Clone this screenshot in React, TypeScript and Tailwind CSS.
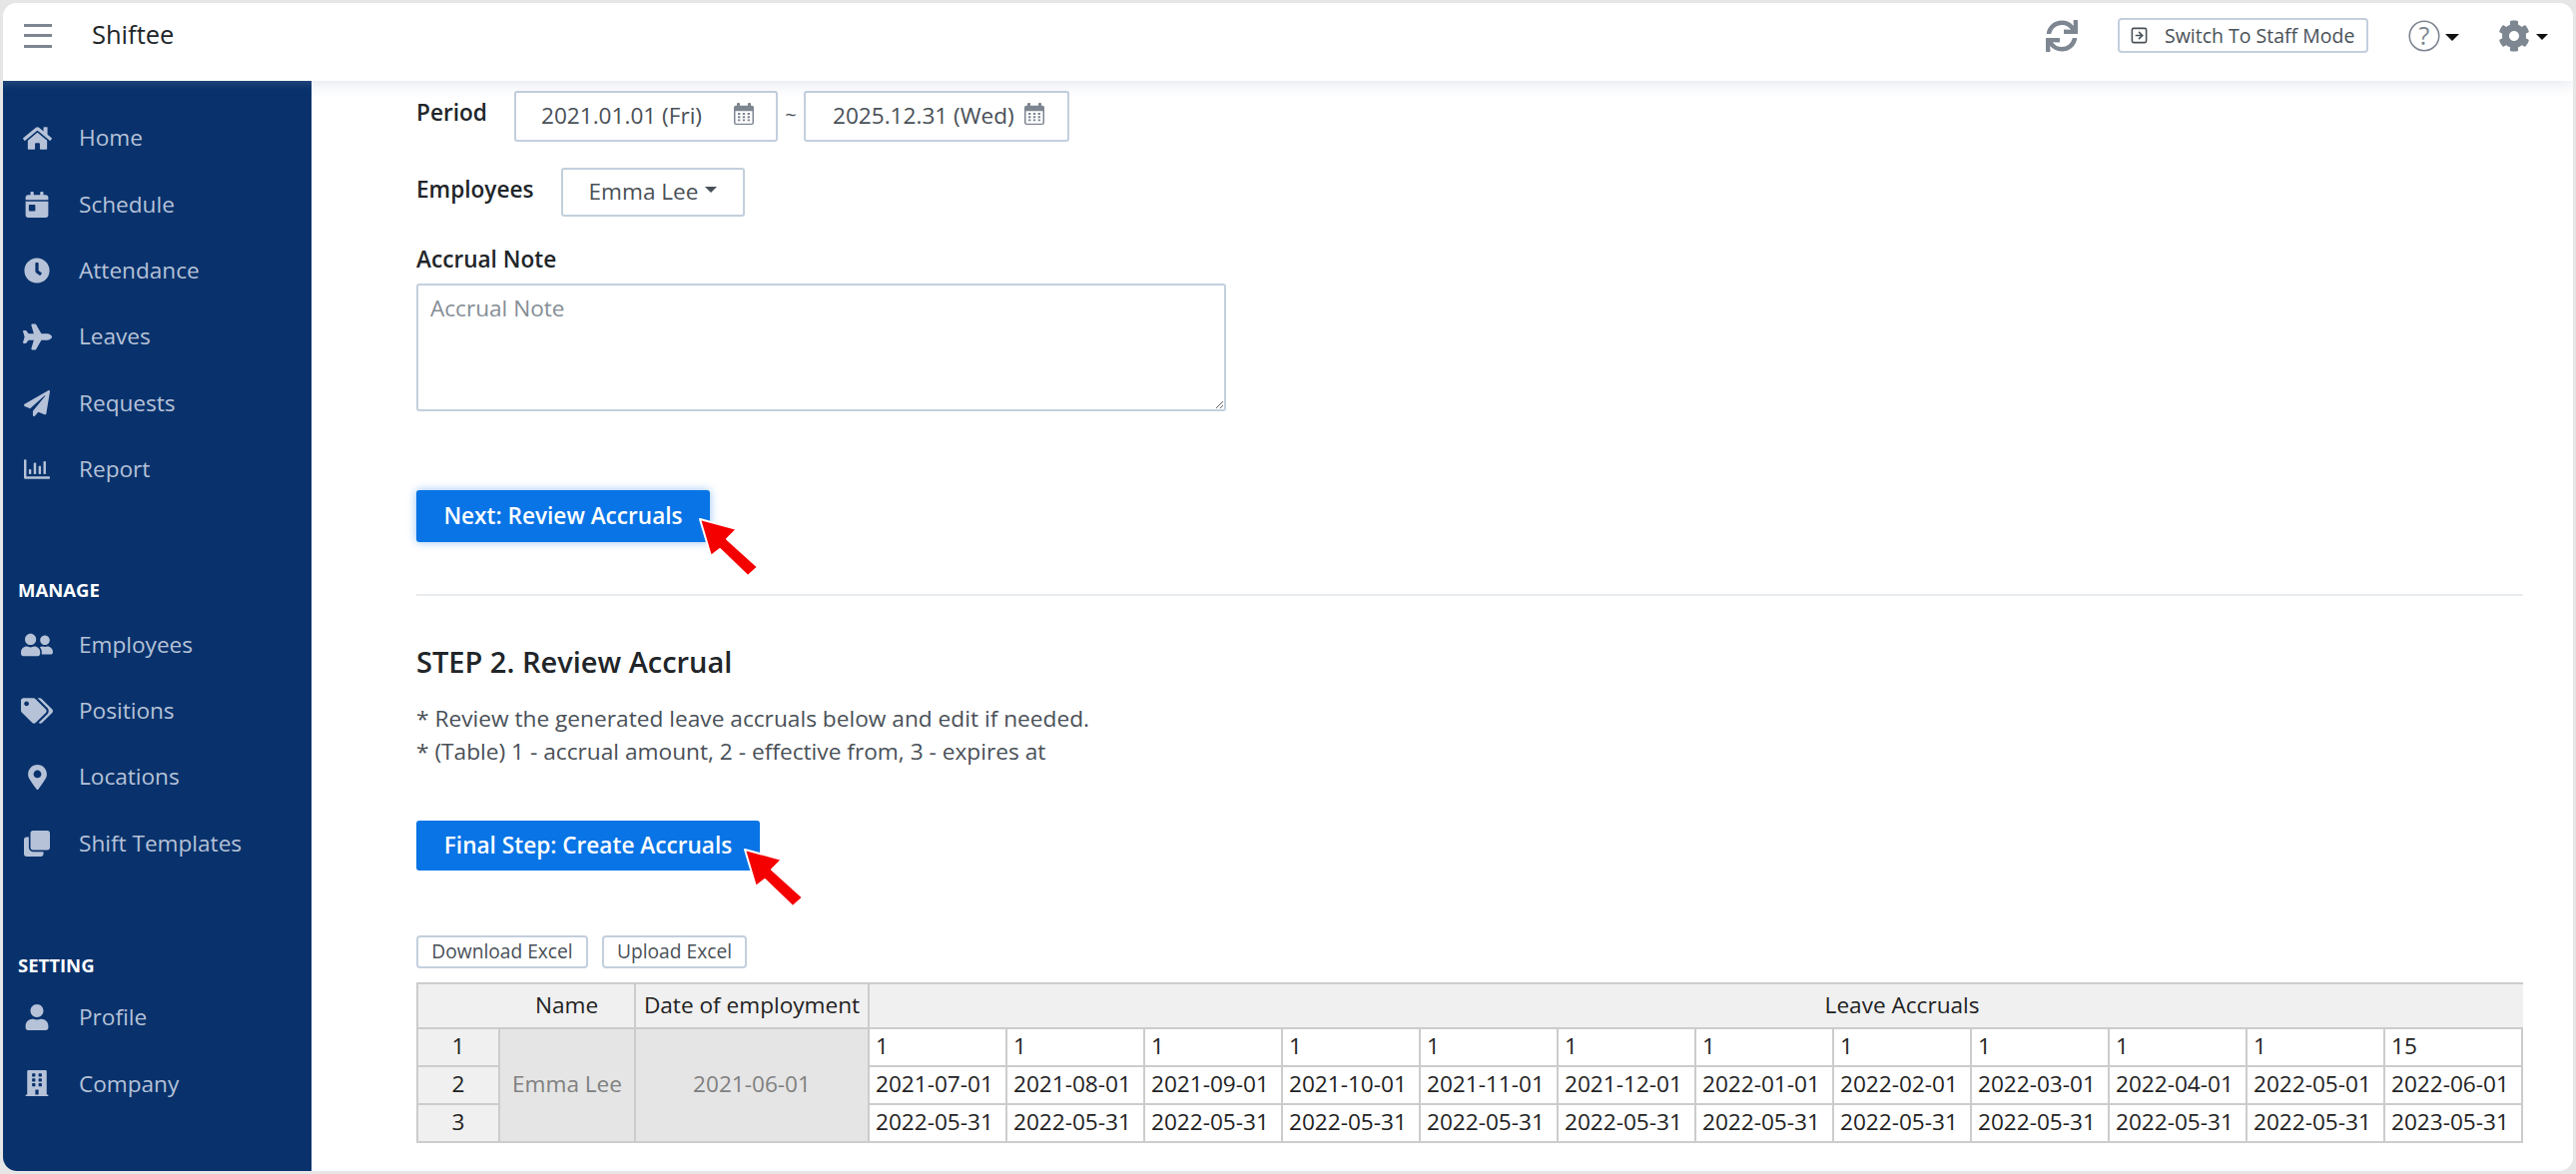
import { SquareArrowRight } from 'lucide-react'
import type { IconType } from 'react-icons'
import {
  FaBuilding,
  FaCalendarDay,
  FaClock,
  FaClone,
  FaCog,
  FaHome,
  FaMapMarkerAlt,
  FaPaperPlane,
  FaPlane,
  FaRegChartBar,
  FaSync,
  FaTags,
  FaUser,
  FaUserFriends,
} from 'react-icons/fa'

const mainLinks: Array<[string, IconType, number]> = [
  ['Home', FaHome, 29],
  ['Schedule', FaCalendarDay, 26],
  ['Attendance', FaClock, 26],
  ['Leaves', FaPlane, 29],
  ['Requests', FaPaperPlane, 26],
  ['Report', FaRegChartBar, 26],
]
const manageLinks: Array<[string, IconType, number]> = [
  ['Employees', FaUserFriends, 32],
  ['Positions', FaTags, 32],
  ['Locations', FaMapMarkerAlt, 25],
  ['Shift Templates', FaClone, 26],
]
const settingLinks: Array<[string, IconType, number]> = [
  ['Profile', FaUser, 26],
  ['Company', FaBuilding, 26],
]

const amounts = ['1', '1', '1', '1', '1', '1', '1', '1', '1', '1', '1', '15', '', '', '']
const effective = [
  '2021-07-01', '2021-08-01', '2021-09-01', '2021-10-01', '2021-11-01', '2021-12-01',
  '2022-01-01', '2022-02-01', '2022-03-01', '2022-04-01', '2022-05-01', '2022-06-01', '', '', '',
]
const expires = [
  '2022-05-31', '2022-05-31', '2022-05-31', '2022-05-31', '2022-05-31', '2022-05-31',
  '2022-05-31', '2022-05-31', '2022-05-31', '2022-05-31', '2022-05-31', '2023-05-31', '', '', '',
]

function NavLinks({ links }: { links: Array<[string, IconType, number]> }) {
  return (
    <>
      {links.map(([label, Icon, size]) => (
        <div key={label} className="flex h-[66.4px] items-center gap-[24px] pl-[16px] text-[22.6px] text-[#b6c2d8]">
          <span className="flex w-[36px] justify-center">
            <Icon size={size} />
          </span>
          {label}
        </div>
      ))}
    </>
  )
}

function CalendarIcon() {
  return (
    <svg width="20" height="22" viewBox="0 0 20 24" preserveAspectRatio="none" className="-mt-[4px] shrink-0 text-[#7d8691]">
      <rect x="3" y="0" width="3" height="5" rx="1" fill="currentColor" />
      <rect x="14" y="0" width="3" height="5" rx="1" fill="currentColor" />
      <path d="M2 3h16a2 2 0 0 1 2 2v4H0V5a2 2 0 0 1 2-2z" fill="currentColor" />
      <rect x="0.75" y="6" width="18.5" height="17.25" rx="1.5" fill="none" stroke="currentColor" strokeWidth="1.5" />
      <path d="M4 12h2.4M8.8 12h2.4M13.6 12h2.4M4 15.5h2.4M8.8 15.5h2.4M13.6 15.5h2.4M4 19h2.4M8.8 19h2.4M13.6 19h2.4" stroke="currentColor" strokeWidth="2" />
    </svg>
  )
}

function RedArrow({ className }: { className: string }) {
  return (
    <svg width="66" height="66" viewBox="-3 -3 66 66" className={className}>
      <polygon
        points="0,0 37,10 27,20 58,48 48,57 20,30 11,37"
        fill="#f50000"
        stroke="#ffffff"
        strokeWidth="2"
        strokeLinejoin="round"
      />
    </svg>
  )
}

const cellClass = 'border-2 border-[#cccccc] px-[6px] pb-[2px] text-left text-[22.6px] font-normal text-[#222222] whitespace-nowrap'
const rowHeadClass = 'border-2 border-[#cccccc] bg-[#f0f0f0] pb-[2px] text-center text-[22.6px] font-normal text-[#222222]'
const mergedClass = 'border-2 border-[#cccccc] bg-[#e5e5e5] pb-[2px] text-center text-[22.6px] font-normal text-[#808080]'

export default function App() {
  return (
    <div className="h-[1176px] w-[2580px] overflow-hidden bg-[#e6e6e6] p-[3px] font-['Open_Sans',sans-serif]">
      <div className="flex h-full flex-col overflow-hidden rounded-[14px] bg-white">
        <header className="relative z-10 flex h-[78px] shrink-0 items-center bg-white pb-[13px] pr-[25px] shadow-[0_3px_14px_rgba(40,70,120,0.13)]">
          <div className="ml-[21px] flex h-[24px] w-[28px] flex-col justify-between">
            <span className="h-[3px] bg-[#7d8691]" />
            <span className="h-[3px] bg-[#7d8691]" />
            <span className="h-[3px] bg-[#7d8691]" />
          </div>
          <span className="ml-[40px] -mt-[3px] text-[25.5px] text-[#212529]">Shiftee</span>

          <FaSync size={32} className="ml-auto text-[#7d8691]" />
          <button className="ml-[40px] flex h-[35px] w-[251px] items-center rounded-[4px] border-2 border-[#c3cfdd] pl-[10px] text-[19.5px] text-[#495057]">
            <SquareArrowRight size={19} className="mr-[16px] text-[#495057]" strokeWidth={2} />
            Switch To Staff Mode
          </button>
          <svg width="32" height="34" viewBox="0 0 32 34" className="ml-[40px] text-[#7d8691]">
            <circle cx="16" cy="17" r="14.75" fill="none" stroke="currentColor" strokeWidth="1.6" />
            <text x="16" y="26" textAnchor="middle" fontSize="25" fill="currentColor" fontFamily="Open Sans">?</text>
          </svg>
          <span className="ml-[5px] mt-[3px] h-0 w-0 border-x-[7px] border-t-[7px] border-x-transparent border-t-[#111111]" />
          <FaCog size={32} className="ml-[39px] text-[#7d8691]" />
          <span className="ml-[6px] mt-[3px] h-0 w-0 border-x-[6px] border-t-[6px] border-x-transparent border-t-[#111111]" />
        </header>

        <div className="flex min-h-0 flex-1">
          <aside className="w-[309px] shrink-0 bg-[#09326c] pt-[24px] shadow-[inset_0_8px_8px_-6px_rgba(255,255,255,0.15)]">
            <NavLinks links={mainLinks} />
            <div className="mt-[73px] flex h-[30px] items-center pl-[15px] text-[18.5px] font-bold text-white">MANAGE</div>
            <div className="mt-[6px]">
              <NavLinks links={manageLinks} />
            </div>
            <div className="mt-[74px] flex h-[30px] items-center pl-[15px] text-[18.5px] font-bold text-white">SETTING</div>
            <div className="mt-[4px]">
              <NavLinks links={settingLinks} />
            </div>
          </aside>

          <main className="min-w-0 flex-1 overflow-hidden pl-[105px] pr-[50px] pt-[10px]">
            <div className="flex h-[51px] items-center">
              <span className="mr-[26px] -mt-[7px] w-[72px] text-[22.6px] font-semibold text-[#212529]">Period</span>
              <div className="flex h-[51px] w-[264px] items-center justify-between rounded-[3px] border-2 border-[#c3cfdd] pb-[2px] pl-[25px] pr-[22px] text-[22.6px] text-[#495057]">
                2021.01.01 (Fri)
                <CalendarIcon />
              </div>
              <span className="w-[26px] -mt-[3px] text-center text-[20px] text-[#495057]">~</span>
              <div className="flex h-[51px] w-[266px] items-center justify-between rounded-[3px] border-2 border-[#c3cfdd] pb-[2px] pl-[27px] pr-[23px] text-[22.6px] text-[#495057]">
                2025.12.31 (Wed)
                <CalendarIcon />
              </div>
            </div>

            <div className="mt-[26px] flex h-[49px] items-center">
              <span className="mr-[27px] -mt-[5px] w-[118px] text-[22.6px] font-semibold text-[#212529]">Employees</span>
              <button className="flex h-[49px] w-[184px] items-center justify-center rounded-[3px] border-2 border-[#c3cfdd] pb-[2px] text-[22.6px] text-[#495057]">
                Emma Lee
                <span className="ml-[7px] h-0 w-0 -translate-y-[2px] border-x-[6px] border-t-[6px] border-x-transparent border-t-[#495057]" />
              </button>
            </div>

            <div className="mt-[28px] h-[30px] text-[22.6px] leading-[30px] font-semibold text-[#212529]">Accrual Note</div>
            <textarea
              readOnly
              placeholder="Accrual Note"
              className="mt-[9px] block h-[128px] w-[811px] rounded-[3px] border-2 border-[#c3cfdd] px-[12px] py-[6px] text-[22.6px] placeholder:text-[#868e96] outline-none"
            />

            <button className="relative mt-[79px] block h-[52px] w-[294px] rounded-[3px] bg-[#0874e6] text-[22.6px] font-semibold text-white shadow-[0_0_8px_rgba(8,116,230,0.45)]">
              Next: Review Accruals
              <RedArrow className="absolute left-[281px] top-[26px]" />
            </button>

            <hr className="mt-[52px] border-t-2 border-[#e9ecef]" />

            <h2 className="mt-[46px] h-[40px] text-[29px] leading-[40px] font-semibold text-[#212529]">STEP 2. Review Accrual</h2>
            <p className="mt-[20px] text-[22.7px] leading-[33px] text-[#495057]">* Review the generated leave accruals below and edit if needed.</p>
            <p className="text-[22.7px] leading-[33px] text-[#495057]">* (Table) 1 - accrual amount, 2 - effective from, 3 - expires at</p>

            <button className="relative mt-[53px] block h-[50px] w-[344px] rounded-[3px] bg-[#0874e6] text-[22.6px] font-semibold text-white">
              Final Step: Create Accruals
              <RedArrow className="absolute left-[326px] top-[26px]" />
            </button>

            <div className="mt-[65px] flex gap-[14px]">
              <button className="h-[33px] w-[172px] rounded-[4px] border-2 border-[#c3cfdd] text-[19.2px] text-[#495057]">Download Excel</button>
              <button className="h-[33px] w-[145px] rounded-[4px] border-2 border-[#c3cfdd] text-[19.2px] text-[#495057]">Upload Excel</button>
            </div>

            <div className="mt-[14px] overflow-hidden">
              <table className="w-[2522px] table-fixed border-collapse">
                <colgroup>
                  <col className="w-[82px]" />
                  <col className="w-[136px]" />
                  <col className="w-[234px]" />
                  {amounts.map((_, index) => (
                    <col key={index} className="w-[138px]" />
                  ))}
                </colgroup>
                <thead>
                  <tr className="h-[45px]">
                    <th className="border-y-2 border-l-2 border-[#cccccc] bg-[#f0f0f0]" />
                    <th className={`${rowHeadClass} border-l-0`}>Name</th>
                    <th className={`${rowHeadClass} whitespace-nowrap`}>Date of employment</th>
                    <th colSpan={15} className={rowHeadClass}>Leave Accruals</th>
                  </tr>
                </thead>
                <tbody>
                  <tr className="h-[38px]">
                    <th className={rowHeadClass}>1</th>
                    <td rowSpan={3} className={mergedClass}>Emma Lee</td>
                    <td rowSpan={3} className={mergedClass}>2021-06-01</td>
                    {amounts.map((value, index) => (
                      <td key={index} className={cellClass}>{value}</td>
                    ))}
                  </tr>
                  <tr className="h-[36px]">
                    <th className={rowHeadClass}>2</th>
                    {effective.map((value, index) => (
                      <td key={index} className={cellClass}>{value}</td>
                    ))}
                  </tr>
                  <tr className="h-[38px]">
                    <th className={rowHeadClass}>3</th>
                    {expires.map((value, index) => (
                      <td key={index} className={cellClass}>{value}</td>
                    ))}
                  </tr>
                </tbody>
              </table>
            </div>
          </main>
        </div>
      </div>
    </div>
  )
}
